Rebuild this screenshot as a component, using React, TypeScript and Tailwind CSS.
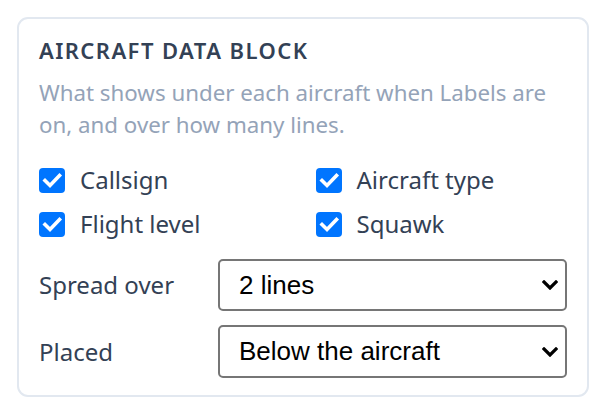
import React from "react";

function Check({ label }: { label: string }) {
  return (
    <label className="flex items-center h-[34px] gap-[15px]">
      <span className="w-[26px] h-[25px] rounded-[4px] bg-[#0075ff] flex items-center justify-center shrink-0">
        <svg width="26" height="25" viewBox="0 0 26 25">
          <path d="M6 12.5 L11 17.5 L20.5 7.5" fill="none" stroke="#ffffff" strokeWidth="3.6" strokeLinecap="square" strokeLinejoin="miter" />
        </svg>
      </span>
      <span className="text-[24px] leading-[34px] text-[#334155]">{label}</span>
    </label>
  );
}

function Select({ value }: { value: string }) {
  return (
    <div className="flex-1 h-full relative border-2 border-[#767676] rounded-[5px] bg-white flex items-center pl-[19px] pr-[8px]">
      <span className="text-[26px] text-black flex-1" style={{ fontFamily: '"Liberation Sans", Arial, sans-serif' }}>{value}</span>
      <svg width="16" height="10" viewBox="0 0 16 10" className="-mr-[1px]">
        <path d="M2 2 L8 8 L14 2" fill="none" stroke="#000000" strokeWidth="3.2" strokeLinecap="square" />
      </svg>
    </div>
  );
}

export default function App() {
  return (
    <div className="w-[606px] h-[412px] bg-white pt-[17px] pl-[17px]" style={{ fontFamily: '"Noto Sans", sans-serif' }}>
      <div className="w-[572px] h-[380px] border-2 border-[#e2e8f0] rounded-[11px] px-[20px] pt-[16px]">
        <div className="text-[22px] leading-[30px] font-semibold tracking-[0.065em] text-[#334155]">AIRCRAFT DATA BLOCK</div>
        <p className="mt-[12px] text-[22.3px] leading-[32px] text-[#94a3b8]">
          What shows under each aircraft when Labels are on, and over how many lines.
        </p>
        <div className="mt-[22px] grid grid-cols-2 gap-x-[25px] gap-y-[10px]">
          <Check label="Callsign" />
          <Check label="Aircraft type" />
          <Check label="Flight level" />
          <Check label="Squawk" />
        </div>
        <div className="mt-[18px] flex flex-col gap-[14px]">
          <div className="flex items-center h-[52px]">
            <span className="w-[179px] text-[24px] text-[#334155]">Spread over</span>
            <Select value="2 lines" />
          </div>
          <div className="flex items-center h-[53px]">
            <span className="w-[179px] text-[24px] text-[#334155]">Placed</span>
            <Select value="Below the aircraft" />
          </div>
        </div>
      </div>
    </div>
  );
}
